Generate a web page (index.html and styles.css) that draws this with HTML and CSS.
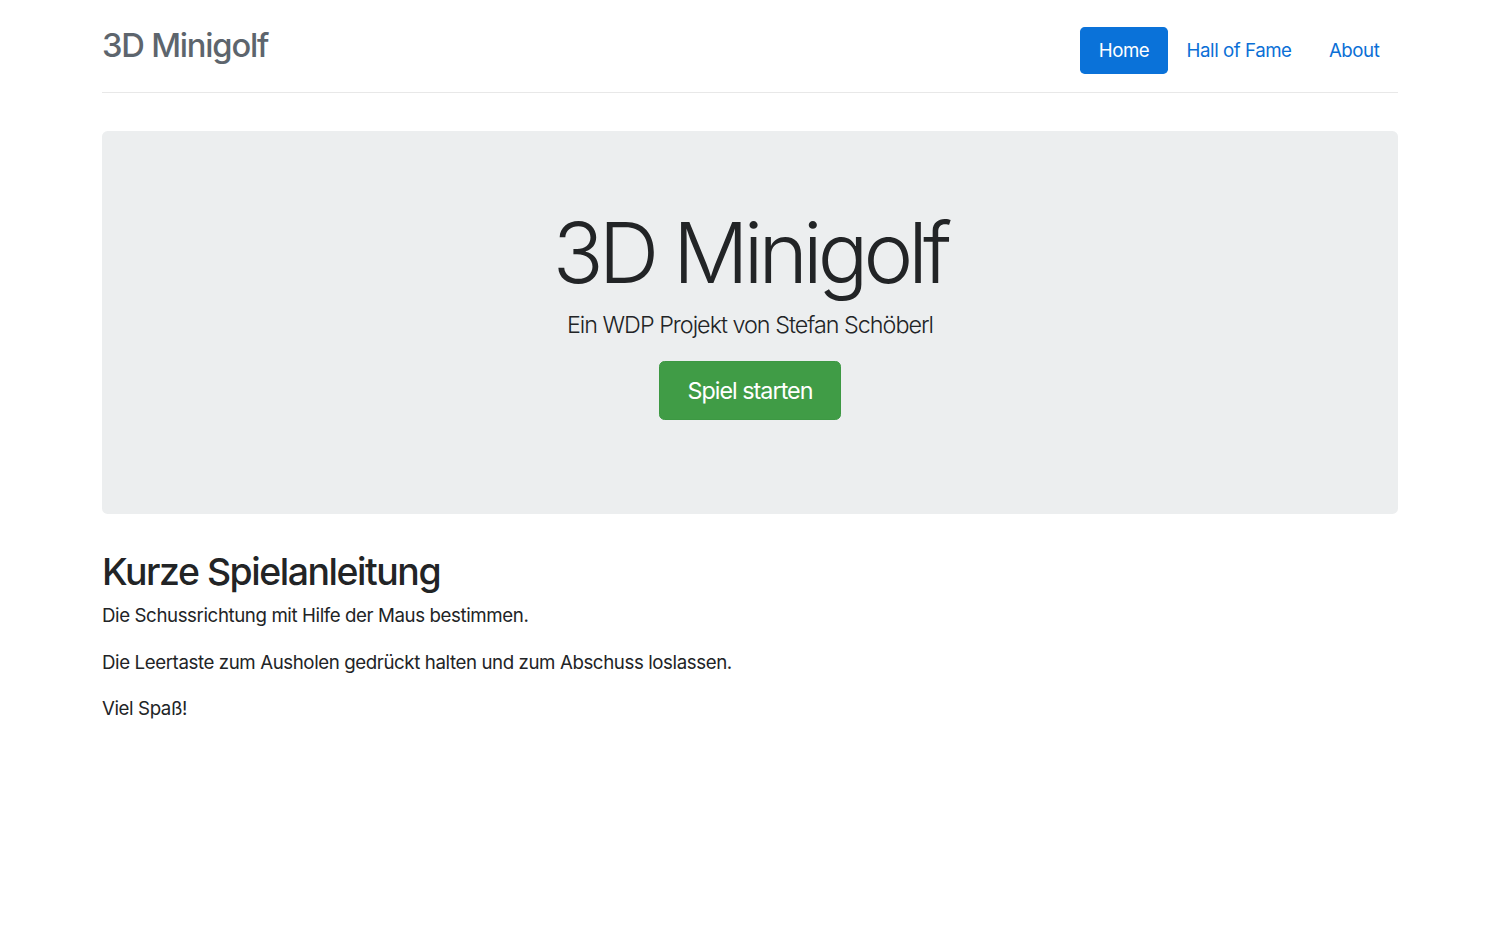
FILE: index.html
```html
<!DOCTYPE html>
<html lang="de">
<head>
<meta charset="utf-8">
<title>3D Minigolf</title>
<link rel="stylesheet" href="styles.css">
</head>
<body>
<div class="container">
  <header class="header">
    <h3 class="brand">3D Minigolf</h3>
    <nav>
      <ul class="nav">
        <li><a class="nav-link active" href="#">Home</a></li>
        <li><a class="nav-link" href="#">Hall of Fame</a></li>
        <li><a class="nav-link" href="#">About</a></li>
      </ul>
    </nav>
  </header>

  <section class="jumbotron">
    <h1 class="display">3D Minigolf</h1>
    <p class="lead">Ein WDP Projekt von Stefan Schöberl</p>
    <div class="actions">
      <a class="btn-start" href="#">Spiel starten</a>
    </div>
  </section>

  <section class="guide">
    <h2 class="guide-title">Kurze Spielanleitung</h2>
    <p>Die Schussrichtung mit Hilfe der Maus bestimmen.</p>
    <p>Die Leertaste zum Ausholen gedrückt halten und zum Abschuss loslassen.</p>
    <p>Viel Spaß!</p>
  </section>
</div>
</body>
</html>
```

FILE: styles.css
```css
html, body {
  margin: 0;
  padding: 0;
  background: #ffffff;
}

body {
  font-family: Inter, "Liberation Sans", sans-serif;
  font-size: 18.68px;
  line-height: 1.5;
  color: #222426;
  letter-spacing: -0.4px;
}

.container {
  width: 1296px;
  margin: 0 auto;
  padding-top: 27px;
}

.header {
  display: flex;
  justify-content: space-between;
  align-items: flex-start;
  padding-bottom: 18px;
  border-bottom: 1px solid #e8e8e8;
}

.brand {
  margin: 0;
  font-size: 32.7px;
  font-weight: 500;
  line-height: 36px;
  color: #5d656d;
  letter-spacing: -1.2px;
}

.nav {
  display: flex;
  list-style: none;
  margin: 0;
  padding: 0;
}

.nav-link {
  display: block;
  padding: 9.5px 18.7px;
  line-height: 28px;
  font-size: 18.68px;
  color: #0b6fd6;
  text-decoration: none;
  border-radius: 4.7px;
  letter-spacing: -0.45px;
}

.nav-link.active {
  background: #0a72d9;
  color: #ffffff;
}

.jumbotron {
  margin-top: 38px;
  background: #eceeef;
  border-radius: 5.6px;
  padding: 76px 37px 75px;
  text-align: center;
}

.display {
  margin: 0 0 8px;
  font-size: 84px;
  font-weight: 300;
  line-height: 1.1;
  letter-spacing: -4.9px;
  color: #222426;
}

.lead {
  margin: 0 0 19px;
  font-size: 23.35px;
  font-weight: 300;
  line-height: 35px;
  letter-spacing: -1px;
}

.actions {
  display: flex;
  justify-content: center;
  margin-bottom: 18.7px;
}

.btn-start {
  display: block;
  padding: 13px 28px;
  font-size: 23.35px;
  line-height: 31px;
  color: #ffffff;
  background: #409c46;
  border: 1px solid #3d9843;
  border-radius: 5.6px;
  text-decoration: none;
  letter-spacing: -1px;
}

.guide {
  margin-top: 37.4px;
}

.guide-title {
  margin: 0 0 9.3px;
  font-size: 37.4px;
  font-weight: 500;
  line-height: 1.1;
  letter-spacing: -1.45px;
}

.guide p {
  margin: 0 0 18.68px;
}
```
